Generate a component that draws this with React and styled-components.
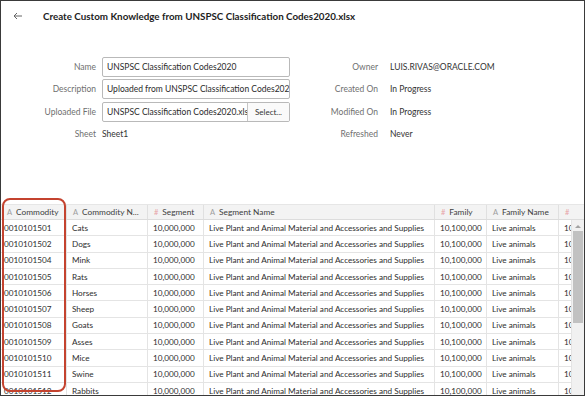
import styled, { createGlobalStyle } from "styled-components";

const GlobalStyle = createGlobalStyle`
  body {
    margin: 0;
    background: #fff;
    font-family: Lato, "Liberation Sans", sans-serif;
  }
`;

const columns = [
    { title: "Commodity", type: "text" },
    { title: "Commodity N...", type: "text" },
    { title: "Segment", type: "number" },
    { title: "Segment Name", type: "text" },
    { title: "Family", type: "number" },
    { title: "Family Name", type: "text" },
    { title: "", type: "number" },
];

const animals = [
    ["0010101501", "Cats"],
    ["0010101502", "Dogs"],
    ["0010101504", "Mink"],
    ["0010101505", "Rats"],
    ["0010101506", "Horses"],
    ["0010101507", "Sheep"],
    ["0010101508", "Goats"],
    ["0010101509", "Asses"],
    ["0010101510", "Mice"],
    ["0010101511", "Swine"],
    ["0010101512", "Rabbits"],
];

const leftFields = [
    { label: "Name", value: "UNSPSC Classification Codes2020", kind: "input" },
    { label: "Description", value: "Uploaded from UNSPSC Classification Codes2020.xlsx", kind: "input" },
    { label: "Uploaded File", value: "UNSPSC Classification Codes2020.xlsx", kind: "file" },
    { label: "Sheet", value: "Sheet1", kind: "text" },
];

const rightFields = [
    { label: "Owner", value: "LUIS.RIVAS@ORACLE.COM" },
    { label: "Created On", value: "In Progress" },
    { label: "Modified On", value: "In Progress" },
    { label: "Refreshed", value: "Never" },
];

export default function App() {
    return (
        <>
            <GlobalStyle />
            <Frame>
                <Header>
                    <BackArrow>
                        <svg width="10" height="8" viewBox="0 0 10 8">
                            <path d="M9 4H1.5M4 1L1 4l3 3" fill="none" stroke="#666" strokeWidth="1" />
                        </svg>
                    </BackArrow>
                    <Title>Create Custom Knowledge from UNSPSC Classification Codes2020.xlsx</Title>
                </Header>

                <Form>
                    <FieldGrid $labelWidth={95} $gap={6}>
                        {leftFields.map(f => (
                            <Field key={f.label}>
                                <Label>{f.label}</Label>
                                {f.kind === "text" && <Value>{f.value}</Value>}
                                {f.kind === "input" && <Input>{f.value}</Input>}
                                {f.kind === "file" && (
                                    <Input>
                                        <FileName>{f.value}</FileName>
                                        <SelectButton>Select...</SelectButton>
                                    </Input>
                                )}
                            </Field>
                        ))}
                    </FieldGrid>
                    <FieldGrid $labelWidth={88} $gap={12}>
                        {rightFields.map(f => (
                            <Field key={f.label}>
                                <Label>{f.label}</Label>
                                <Value>{f.value}</Value>
                            </Field>
                        ))}
                    </FieldGrid>
                </Form>

                <Table>
                    <HeaderRow>
                        {columns.map((c, i) => (
                            <HeadCell key={i}>
                                <TypeIcon $type={c.type}>{c.type === "number" ? "#" : "A"}</TypeIcon>
                                {c.title}
                            </HeadCell>
                        ))}
                    </HeaderRow>
                    <Body>
                        <Rows>
                            {animals.map(([code, name]) => (
                                <Row key={code}>
                                    <Cell>{code}</Cell>
                                    <Cell>{name}</Cell>
                                    <Cell>10,000,000</Cell>
                                    <Cell>Live Plant and Animal Material and Accessories and Supplies</Cell>
                                    <Cell>10,100,000</Cell>
                                    <Cell>Live animals</Cell>
                                    <Cell>10,101,500</Cell>
                                </Row>
                            ))}
                        </Rows>
                        <ScrollTrack>
                            <ScrollArrow />
                            <ScrollThumb />
                        </ScrollTrack>
                    </Body>
                    <Highlight />
                </Table>
            </Frame>
        </>
    );
}

const Frame = styled.div`
    width: 585px;
    height: 396px;
    box-sizing: border-box;
    border: 1px solid #3a3a3a;
    overflow: hidden;
    display: flex;
    flex-direction: column;
    color: #333;
`;

const Header = styled.div`
    height: 30px;
    display: flex;
    align-items: center;
    padding-left: 12px;
`;

const BackArrow = styled.div`
    width: 30px;
    display: flex;
    align-items: center;
`;

const Title = styled.h1`
    margin: 0;
    font-size: 9.8px;
    font-weight: 700;
    color: #1d1d1d;
    white-space: nowrap;
`;

const Form = styled.div`
    display: flex;
    padding-top: 26px;
`;

const FieldGrid = styled.div`
    display: grid;
    grid-auto-rows: 20px;
    row-gap: 2.3px;
    --label-width: ${p => p.$labelWidth}px;
    --gap: ${p => p.$gap}px;
`;

const Field = styled.div`
    display: grid;
    grid-template-columns: var(--label-width) auto;
    column-gap: var(--gap);
    align-items: center;
`;

const Label = styled.span`
    text-align: right;
    font-size: 8.5px;
    color: #6f6f6f;
    white-space: nowrap;
`;

const Value = styled.span`
    font-size: 8.5px;
    color: #333;
    white-space: nowrap;
`;

const Input = styled.div`
    width: 188px;
    height: 20px;
    box-sizing: border-box;
    border: 1px solid #b9b9b9;
    border-radius: 2px;
    display: flex;
    align-items: center;
    padding-left: 4px;
    font-size: 8.5px;
    color: #2b2b2b;
    white-space: nowrap;
    overflow: hidden;
`;

const FileName = styled.span`
    flex: 1;
    overflow: hidden;
    white-space: nowrap;
`;

const SelectButton = styled.span`
    flex: none;
    width: 42px;
    height: 100%;
    box-sizing: border-box;
    border-left: 1px solid #c6c6c6;
    background: #fafafa;
    display: flex;
    align-items: center;
    justify-content: center;
    font-size: 8px;
    color: #333;
`;

const Table = styled.div`
    position: relative;
    margin-top: auto;
    height: 191px;
    display: flex;
    flex-direction: column;
`;

const gridColumns = "66px 81px 56px 231px 52px 72px 1fr";

const HeaderRow = styled.div`
    display: grid;
    grid-template-columns: ${gridColumns};
    height: 14px;
    background: #f3f3f3;
    border-top: 1px solid #e6e6e6;
    border-bottom: 1px solid #dcdcdc;
`;

const HeadCell = styled.div`
    display: flex;
    align-items: center;
    padding-left: 6px;
    border-right: 1px solid #e0e0e0;
    font-size: 8.3px;
    color: #3d3d3d;
    white-space: nowrap;
    overflow: hidden;

    &:last-child {
        border-right: none;
    }
`;

const TypeIcon = styled.span`
    font-size: 7.5px;
    margin-right: 4px;
    color: ${p => (p.$type === "number" ? "#e7a3a8" : "#9d9d9d")};
`;

const Body = styled.div`
    flex: 1;
    display: flex;
    overflow: hidden;
`;

const Rows = styled.div`
    flex: 1;
    overflow: hidden;
`;

const Row = styled.div`
    display: grid;
    grid-template-columns: ${gridColumns};
    height: 16.3px;
    box-sizing: border-box;
    border-bottom: 1px solid #e4e4e4;
`;

const Cell = styled.div`
    display: flex;
    align-items: center;
    padding-left: 5px;
    border-right: 1px solid #e4e4e4;
    font-size: 8.2px;
    color: #2e2e2e;
    white-space: nowrap;
    overflow: hidden;

    &:first-child {
        padding-left: 3px;
    }
`;

const ScrollTrack = styled.div`
    width: 12px;
    background: #f1f1f1;
    display: flex;
    flex-direction: column;
    align-items: center;
`;

const ScrollArrow = styled.div`
    margin-top: 5px;
    width: 0;
    height: 0;
    border-left: 3px solid transparent;
    border-right: 3px solid transparent;
    border-bottom: 3px solid #a3a3a3;
`;

const ScrollThumb = styled.div`
    margin-top: 3px;
    width: 10px;
    height: 92px;
    background: #c1c1c1;
`;

const Highlight = styled.div`
    position: absolute;
    left: 1px;
    top: -6px;
    width: 64px;
    height: 194px;
    box-sizing: border-box;
    border: 2.5px solid #c4432f;
    border-radius: 8px;
    pointer-events: none;
`;
